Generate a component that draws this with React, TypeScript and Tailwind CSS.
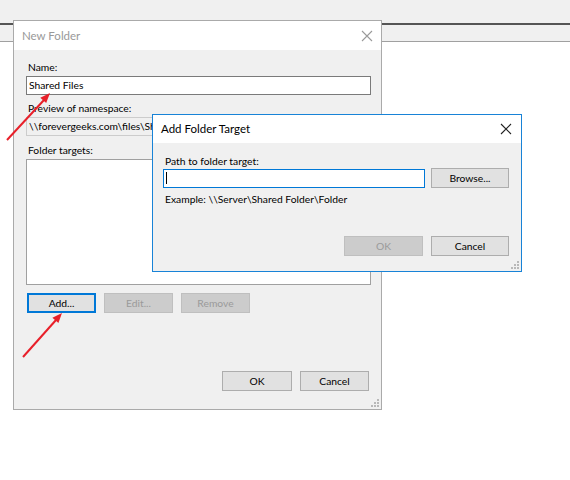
import React from 'react';

function Grip() {
  return (
    <svg width="8" height="8" viewBox="0 0 8 8" className="absolute right-[2px] bottom-[2px]">
      <rect x="6" y="0" width="2" height="2" fill="#b8b8b8" />
      <rect x="3" y="3" width="2" height="2" fill="#b8b8b8" />
      <rect x="6" y="3" width="2" height="2" fill="#b8b8b8" />
      <rect x="0" y="6" width="2" height="2" fill="#b8b8b8" />
      <rect x="3" y="6" width="2" height="2" fill="#b8b8b8" />
      <rect x="6" y="6" width="2" height="2" fill="#b8b8b8" />
    </svg>
  );
}

function CloseX({ color }: { color: string }) {
  return (
    <svg width="12" height="12" viewBox="0 0 12 12">
      <path d="M1 1 L11 11 M11 1 L1 11" stroke={color} strokeWidth="1.1" fill="none" />
    </svg>
  );
}

function Btn({
  children,
  disabled,
  focused,
  w,
}: {
  children: React.ReactNode;
  disabled?: boolean;
  focused?: boolean;
  w: string;
}) {
  const base = 'h-[20px] flex items-center justify-center text-[10.3px] leading-none';
  if (disabled)
    return <div className={`${base} ${w} bg-[#cccccc] border border-[#bfbfbf] text-[#9a9a9a]`}>{children}</div>;
  if (focused)
    return <div className={`${base} ${w} bg-[#e1e1e1] border-2 border-[#0078d7] text-black`}>{children}</div>;
  return <div className={`${base} ${w} bg-[#e1e1e1] border border-[#adadad] text-black`}>{children}</div>;
}

function NewFolder() {
  return (
    <div className="absolute left-[13px] top-[20px] w-[369px] h-[390px] border border-[#aaaaaa] bg-[#f0f0f0] flex flex-col">
      <div className="h-[29px] bg-white flex items-center justify-between pl-[8px] pr-[8px]">
        <span className="text-[11.5px] text-[#999999]">New Folder</span>
        <CloseX color="#9a9a9a" />
      </div>
      <div className="relative flex-1 flex flex-col pl-[12px] pr-[10px] pt-[10px] text-[10.3px] text-black">
        <div className="pl-[2px] leading-[14px]">Name:</div>
        <div className="mt-[2px] h-[19px] bg-white border border-[#7a7a7a] flex items-center pl-[2px] leading-none">
          Shared Files
        </div>
        <div className="mt-[6px] pl-[2px] leading-[14px]">Preview of namespace:</div>
        <div className="mt-[2px] h-[19px] bg-[#f0f0f0] border border-[#cccccc] flex items-center pl-[2px] leading-none">
          <span className="w-[124px] overflow-hidden whitespace-nowrap">\\forevergeeks.com\files\Shared Files</span>
        </div>
        <div className="mt-[7px] pl-[2px] leading-[14px]">Folder targets:</div>
        <div className="mt-[2px] h-[126px] bg-white border border-[#a0a0a0]" />
        <div className="mt-[8px] flex gap-[8px] pl-[1px]">
          <Btn focused w="w-[69px]">Add...</Btn>
          <Btn disabled w="w-[69px]">Edit...</Btn>
          <Btn disabled w="w-[69px]">Remove</Btn>
        </div>
        <div className="mt-[58px] flex justify-end gap-[8px] pr-[2px]">
          <Btn w="w-[70px]">OK</Btn>
          <Btn w="w-[69px]">Cancel</Btn>
        </div>
        <Grip />
      </div>
    </div>
  );
}

function AddTarget() {
  return (
    <div className="absolute left-[152px] top-[114px] w-[370px] h-[158px] border border-[#1883d7] bg-[#f0f0f0] flex flex-col">
      <div className="h-[28px] bg-white flex items-center justify-between pl-[8px] pr-[9px]">
        <span className="text-[11.5px] text-black">Add Folder Target</span>
        <CloseX color="#222222" />
      </div>
      <div className="relative flex-1 flex flex-col pl-[10px] pr-[12px] pt-[11px] text-[10.3px] text-black">
        <div className="pl-[2px] leading-[14px]">Path to folder target:</div>
        <div className="flex items-center gap-[6px]">
          <div className="w-[262px] h-[19px] bg-white border border-[#0078d7] flex items-center pl-[2px]">
            <div className="w-[1px] h-[12px] bg-black" />
          </div>
          <Btn w="w-[78px]">Browse...</Btn>
        </div>
        <div className="mt-[4px] pl-[2px] leading-[14px]">Example: \\Server\Shared Folder\Folder</div>
        <div className="mt-[30px] flex justify-end gap-[8px]">
          <Btn disabled w="w-[79px]">OK</Btn>
          <Btn w="w-[78px]">Cancel</Btn>
        </div>
        <Grip />
      </div>
    </div>
  );
}

export default function App() {
  return (
    <div className="relative w-[570px] h-[480px] bg-white overflow-hidden font-[Lato,sans-serif]">
      <div className="h-[23px] bg-[#f0f0f0]" />
      <div className="h-[2px] bg-[#555555]" />
      <div className="h-[17px] bg-[#f0f0f0] border-b border-[#a0a0a0]" />

      <NewFolder />
      <AddTarget />

      <svg className="absolute left-0 top-0" width="570" height="480" viewBox="0 0 570 480">
        <line x1="7" y1="140" x2="44" y2="100" stroke="#e8202a" strokeWidth="2" />
        <polygon points="50,93 46.2,103.1 40.3,97.7" fill="#e8202a" />
        <line x1="23" y1="357" x2="56" y2="320" stroke="#e8202a" strokeWidth="2" />
        <polygon points="62,313 58.4,323.1 52.4,317.8" fill="#e8202a" />
      </svg>
    </div>
  );
}
